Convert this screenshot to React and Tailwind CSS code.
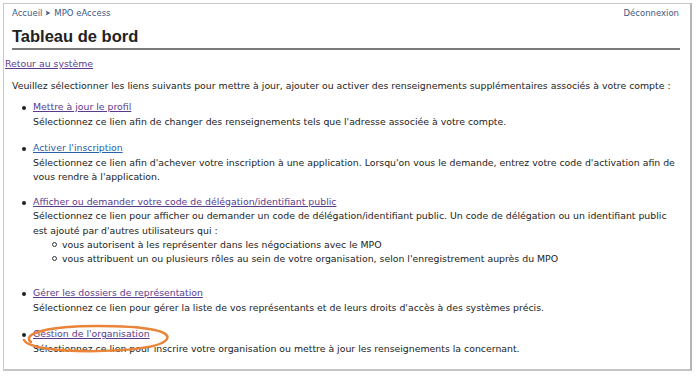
import React from 'react';

const body = { fontFamily: '"DejaVu Sans", Verdana, sans-serif' };

const Item = ({ href, visited = true, children, className = '' }) => (
  <li className={`relative pl-[21px] ${className}`}>
    <span className="absolute left-[10px] top-[6px] h-[4px] w-[4px] rounded-full bg-[#222]" />
    <a
      href={href}
      className={`underline ${visited ? 'text-[#5b3a8c]' : 'text-[#2b5ea8]'}`}
    >
      {children[0]}
    </a>
    <div>{children.slice(1)}</div>
  </li>
);

const Sub = ({ children }) => (
  <li className="relative pl-[29px]">
    <span className="absolute left-[19px] top-[4px] h-[5px] w-[5px] rounded-full border border-[#333]" />
    {children}
  </li>
);

export default function App() {
  return (
    <div className="w-[700px] h-[377px] bg-white overflow-hidden pt-[3px] pl-[3px]">
      <div className="relative w-[689px] h-[368px] border-t border-l border-[#c9c9c9] border-r-[2px] border-r-[#b4b4b4] border-b-[2px] border-b-[#c4c4c4] text-[#222]" style={body}>
        <header className="px-2 pt-[3px]">
          <div className="flex justify-between text-[8.5px] text-[#3b5a86] leading-[12px]">
            <div className="flex items-center gap-[3px]">
              <span>Accueil</span>
              <svg width="6" height="6" viewBox="0 0 6 6">
                <path d="M0.5 0.5 L5.5 3 L0.5 5.5 L1.8 3 Z" fill="#3b5a86" />
              </svg>
              <span>MPO eAccess</span>
            </div>
            <span className="pr-[3px]">Déconnexion</span>
          </div>
          <h1
            className="mt-[7px] text-[16.5px] font-bold leading-[20px] text-[#222] pb-[2px] border-b-[2px] border-[#7a7a7a] mr-[2px]"
            style={{ fontFamily: '"Liberation Sans", Arial, sans-serif' }}
          >
            Tableau de bord
          </h1>
        </header>

        <div className="text-[9.35px] leading-[14.5px]">
          <a href="#" className="block mt-[7px] pl-[1px] underline text-[#5b3a8c]">
            Retour au système
          </a>

          <div className="pl-2 pr-2">
            <p className="mt-[7px]">
              Veuillez sélectionner les liens suivants pour mettre à jour, ajouter ou activer des renseignements supplémentaires associés à votre compte :
            </p>

            <ul className="mt-[7px]">
              <Item href="#">
                {['Mettre à jour le profil', 'Sélectionnez ce lien afin de changer des renseignements tels que l\'adresse associée à votre compte.']}
              </Item>
              <Item href="#" visited={false} className="mt-[12px]">
                {['Activer l\'inscription', 'Sélectionnez ce lien afin d\'achever votre inscription à une application. Lorsqu\'on vous le demande, entrez votre code d\'activation afin de vous rendre à l\'application.']}
              </Item>
              <Item href="#" className="mt-[10px]">
                {[
                  'Afficher ou demander votre code de délégation/identifiant public',
                  'Sélectionnez ce lien pour afficher ou demander un code de délégation/identifiant public. Un code de délégation ou un identifiant public est ajouté par d\'autres utilisateurs qui :',
                  <ul key="s" className="leading-[13.5px]">
                    <Sub>vous autorisent à les représenter dans les négociations avec le MPO</Sub>
                    <Sub>vous attribuent un ou plusieurs rôles au sein de votre organisation, selon l'enregistrement auprès du MPO</Sub>
                  </ul>,
                ]}
              </Item>
              <Item href="#" className="mt-[21px]">
                {['Gérer les dossiers de représentation', 'Sélectionnez ce lien pour gérer la liste de vos représentants et de leurs droits d\'accès à des systèmes précis.']}
              </Item>
              <Item href="#" className="mt-[12px]">
                {['Gestion de l\'organisation', 'Sélectionnez ce lien pour inscrire votre organisation ou mettre à jour les renseignements la concernant.']}
              </Item>
            </ul>
          </div>
        </div>

        <svg className="absolute left-[13px] top-[317px] pointer-events-none" width="156" height="36" viewBox="0 0 156 36">
          <path
            d="M14 21 C 4 13, 30 5, 80 5 C 130 5, 154 10, 150 18 C 146 26, 110 31, 60 30 C 30 29, 10 25, 7 19"
            fill="none"
            stroke="#ea8438"
            strokeWidth="2.5"
            strokeLinecap="round"
          />
        </svg>
      </div>
    </div>
  );
}
